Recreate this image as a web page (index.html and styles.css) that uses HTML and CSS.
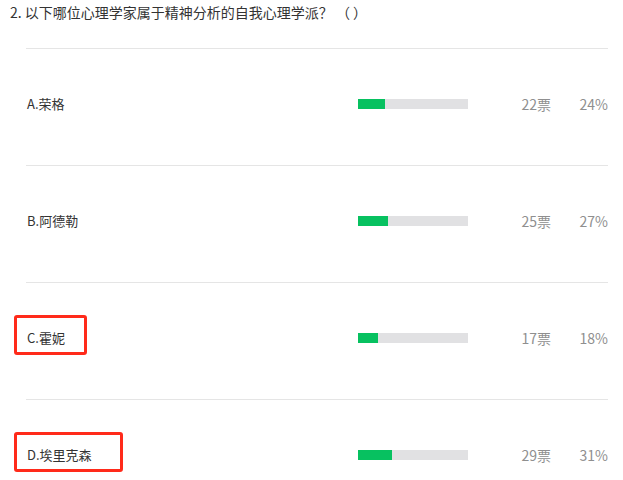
FILE: index.html
```html
<!DOCTYPE html>
<html lang="zh-CN">
<head>
<meta charset="utf-8">
<link rel="stylesheet" href="styles.css">
</head>
<body>
<div class="question">
  <div class="title">2. 以下哪位心理学家属于精神分析的自我心理学派？ （ ）</div>
  <div class="options">
    <div class="row">
      <div class="label">A.荣格</div>
      <div class="bar"><div class="fill" style="width:24.5%"></div></div>
      <div class="votes">22票</div>
      <div class="pct">24%</div>
    </div>
    <div class="row">
      <div class="label">B.阿德勒</div>
      <div class="bar"><div class="fill" style="width:27.3%"></div></div>
      <div class="votes">25票</div>
      <div class="pct">27%</div>
    </div>
    <div class="row">
      <div class="label"><span class="text">C.霍妮</span><span class="mark mark-c"></span></div>
      <div class="bar"><div class="fill" style="width:18.2%"></div></div>
      <div class="votes">17票</div>
      <div class="pct">18%</div>
    </div>
    <div class="row">
      <div class="label"><span class="text">D.埃里克森</span><span class="mark mark-d"></span></div>
      <div class="bar"><div class="fill" style="width:31%"></div></div>
      <div class="votes">29票</div>
      <div class="pct">31%</div>
    </div>
  </div>
</div>
</body>
</html>
```

FILE: styles.css
```css
html, body {
  margin: 0;
  padding: 0;
  background: #fff;
  overflow: hidden;
}
body {
  font-family: "Noto Sans CJK SC", "Microsoft YaHei", "Noto Sans", sans-serif;
  color: #333;
  width: 623px;
  height: 480px;
}
.title {
  font-size: 14px;
  line-height: 18px;
  padding: 3px 0 0 10px;
  height: 45px;
  color: #333;
}
.options {
  margin: 0 15px 0 26px;
}
.row {
  display: grid;
  grid-template-columns: 332px 110px 83px 57px;
  align-items: center;
  box-sizing: border-box;
  height: 117px;
  padding-bottom: 6px;
  border-top: 1px solid #e5e5e5;
}
.label {
  position: relative;
  padding-left: 1px;
  font-size: 13px;
  line-height: 18px;
}
.text {
  position: relative;
}
.mark {
  position: absolute;
  border: 3px solid #ff2a1a;
  border-radius: 3px;
  box-sizing: border-box;
}
.mark-c {
  left: -12px;
  top: -14px;
  width: 73px;
  height: 40px;
}
.mark-d {
  left: -12px;
  top: -14px;
  width: 109px;
  height: 40px;
}
.bar {
  height: 10px;
  background: #e1e1e3;
}
.fill {
  height: 100%;
  background: #07c160;
}
.votes, .pct {
  text-align: right;
  font-size: 14px;
  line-height: 18px;
  color: #8f8f8f;
}
```
